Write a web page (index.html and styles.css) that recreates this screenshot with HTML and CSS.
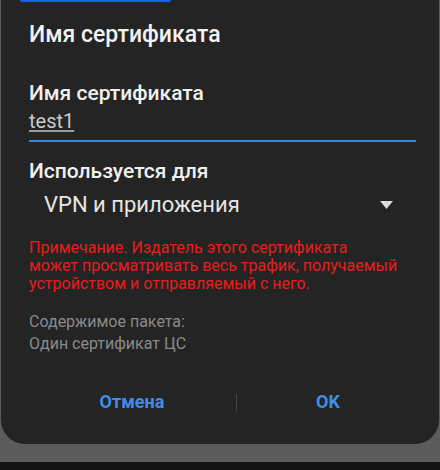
FILE: index.html
```html
<!DOCTYPE html>
<html lang="ru">
<head>
<meta charset="utf-8">
<title>Имя сертификата</title>
<link rel="stylesheet" href="styles.css">
</head>
<body>
<div class="screen">
  <div class="top-bar"></div>
  <div class="dialog">
    <h1 class="title">Имя сертификата</h1>
    <div class="section">
      <div class="label">Имя сертификата</div>
      <div class="field"><span class="value">test1</span></div>
    </div>
    <div class="section">
      <div class="label label-used">Используется для</div>
      <div class="select">
        <span class="select-text">VPN и приложения</span>
        <svg class="caret" width="13" height="8" viewBox="0 0 13 8"><path d="M0 0H13L6.5 8Z" fill="#dcdcdc"/></svg>
      </div>
    </div>
    <p class="warning">Примечание. Издатель этого сертификата<br>может просматривать весь трафик, получаемый<br>устройством и отправляемый с него.</p>
    <div class="package">
      <div>Содержимое пакета:</div>
      <div>Один сертификат ЦС</div>
    </div>
    <div class="buttons">
      <button class="btn">Отмена</button>
      <span class="divider"></span>
      <button class="btn">OK</button>
    </div>
  </div>
</div>
</body>
</html>
```
FILE: styles.css
```css
* { box-sizing: border-box; }
html, body {
  margin: 0;
  padding: 0;
  background: #131313;
  font-family: Roboto, "Noto Sans", "Liberation Sans", sans-serif;
}
.screen {
  position: relative;
  width: 440px;
  height: 462px;
  background: #5b5b5b;
  padding-left: 1px;
  overflow: hidden;
}
.top-bar {
  position: absolute;
  left: 20px;
  top: 0;
  width: 151px;
  height: 2px;
  background: #1262ea;
  border-radius: 0 0 2px 2px;
}
.dialog {
  width: 438px;
  height: 444px;
  background: #242424;
  border-radius: 0 0 24px 24px;
  padding: 21px 23px 0 28px;
}
.title {
  margin: 0;
  font-size: 23px;
  line-height: 28px;
  font-weight: 500;
  color: #f2f2f2;
}
.section { margin-top: 31px; }
.label {
  font-size: 21px;
  line-height: 26px;
  font-weight: 500;
  color: #f0f0f0;
}
.field {
  margin-top: 3px;
  padding-bottom: 7px;
  border-bottom: 2px solid #2f86dc;
}
.value {
  display: block;
  font-size: 20px;
  line-height: 24px;
  color: #c9c9c9;
  text-decoration: underline;
  text-decoration-color: #9a9a9a;
  text-underline-offset: 2px;
}
.section + .section { margin-top: 16px; }
.select {
  margin-top: 8px;
  display: flex;
  align-items: center;
  justify-content: space-between;
  padding: 0 23px 0 15px;
  height: 26px;
}
.select-text {
  font-size: 22px;
  line-height: 26px;
  color: #e6e6e6;
}
.caret { display: block; }
.warning {
  margin: 21px 0 0;
  font-size: 16px;
  line-height: 18px;
  color: #e81d1b;
}
.package {
  margin-top: 18px;
  font-size: 16px;
  line-height: 22px;
  color: #8a8a8a;
}
.buttons {
  margin: 25px -3px 0 -1px;
  display: grid;
  grid-template-columns: 208px 1px 1fr;
  align-items: center;
  height: 44px;
}
.btn {
  background: none;
  border: 0;
  padding: 0;
  font-family: inherit;
  font-size: 18px;
  font-weight: 700;
  line-height: 44px;
  color: #3f8de6;
  text-align: center;
}
.divider {
  width: 1px;
  height: 17px;
  background: #464646;
}
```
